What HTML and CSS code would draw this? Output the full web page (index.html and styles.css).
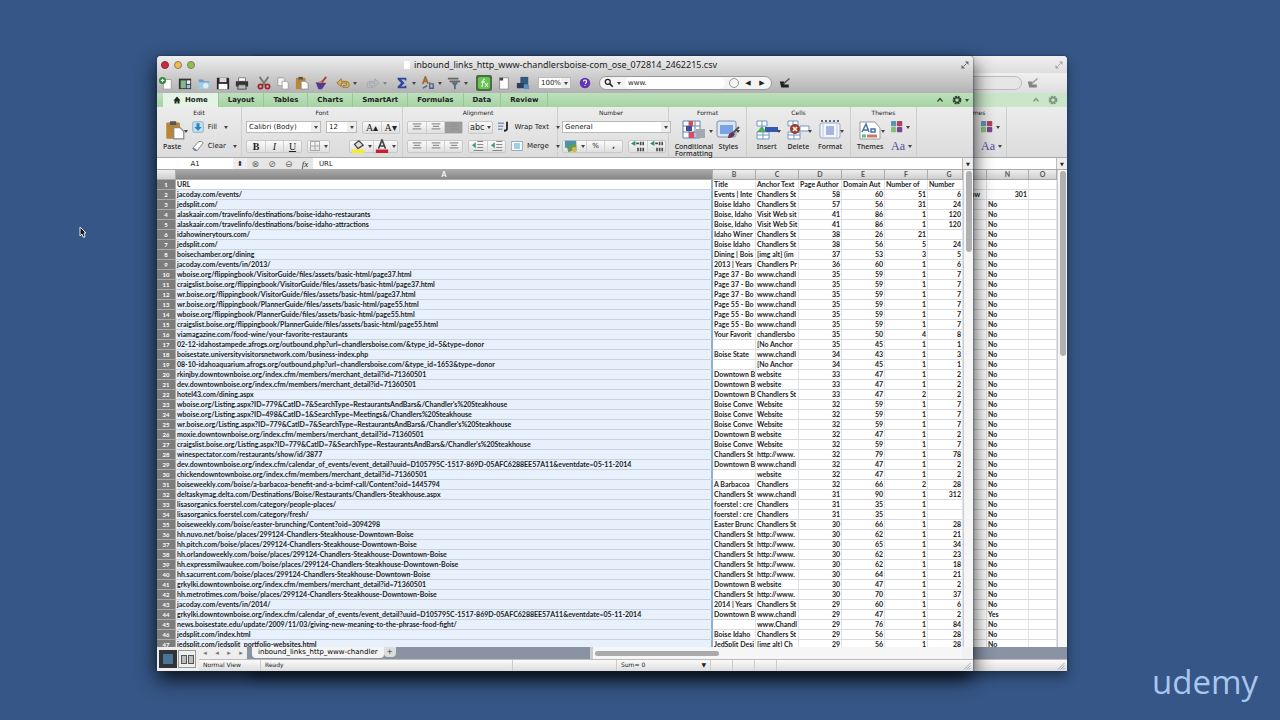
FILE: index.html
```
<!DOCTYPE html>
<html lang="en">
<head>
  <meta charset="UTF-8">
  <meta name="viewport" content="width=device-width, initial-scale=1.0">
  <title>inbound_links_http_www-chandlersboise-com_ose_072814_2462215.csv</title>
  <link rel="stylesheet" href="styles.css">
</head>
<body>

  <!-- icon set -->
  <svg class="defs" aria-hidden="true">
    <symbol id="i-new" viewBox="0 0 16 16"><path d="M5 4h9v11H5z" fill="#fff" stroke="#999"/><circle cx="4" cy="5" r="4" fill="#2f8a35"/><path d="M4 3v4M2 5h4" stroke="#fff" stroke-width="1.4"/></symbol>
    <symbol id="i-gallery" viewBox="0 0 16 16"><rect x="1" y="3" width="14" height="12" fill="#333"/><rect x="3" y="5" width="6" height="9" fill="#7fb98c"/><rect x="10" y="5" width="4" height="4" fill="#eee"/><rect x="10" y="10" width="4" height="4" fill="#9fc0e0"/></symbol>
    <symbol id="i-open" viewBox="0 0 16 16"><path d="M2 4h5l1 2h6v8H2z" fill="#6f9dc2"/><path d="M1 7h14l-1 8H2z" fill="#a4cbe5"/><circle cx="10" cy="11" r="3" fill="#e2eef6"/></symbol>
    <symbol id="i-save" viewBox="0 0 16 16"><path d="M1 2h13l1 1v12H1z" fill="#27272b"/><rect x="4" y="2" width="8" height="5" fill="#d8d8dc"/><rect x="3" y="9" width="10" height="6" fill="#fff"/></symbol>
    <symbol id="i-print" viewBox="0 0 16 16"><path d="M4 2h8v4H4z" fill="#fff" stroke="#777"/><path d="M1 6h14v6H1z" fill="#333"/><path d="M4 10h8l1 5H3z" fill="#bbb" stroke="#444"/></symbol>
    <symbol id="i-cut" viewBox="0 0 16 16"><path d="M3 1l7 10M13 1L6 11" stroke="#777" stroke-width="2"/><circle cx="4" cy="12" r="2.4" fill="none" stroke="#a3232a" stroke-width="2"/><circle cx="12" cy="12" r="2.4" fill="none" stroke="#a3232a" stroke-width="2"/></symbol>
    <symbol id="i-copy" viewBox="0 0 16 16"><path d="M2 2h6l2 2v7H2z" fill="#f4f4f4" stroke="#999"/><path d="M7 6h5l2 2v7H7z" fill="#fff" stroke="#999"/></symbol>
    <symbol id="i-paste" viewBox="0 0 16 16"><rect x="1" y="2" width="11" height="13" rx="1" fill="#b88636"/><rect x="4" y="1" width="5" height="3" fill="#555"/><path d="M7 6h5l3 3v6H7z" fill="#fff" stroke="#888"/></symbol>
    <symbol id="i-brush" viewBox="0 0 16 16"><path d="M2 7l12 1-5 7H5z" fill="#513b91"/><path d="M4 7l5-2 4 3z" fill="#d2843c"/><path d="M9 7l5-6" stroke="#b23b32" stroke-width="2"/></symbol>
    <symbol id="i-undo" viewBox="0 0 16 16"><path d="M1 8l5-5v3h5q4 0 4 4t-4 3H8v-2h3q1 0 1-2t-1-1H6v4z" fill="#d9b353" stroke="#98722a"/></symbol>
    <symbol id="i-redo" viewBox="0 0 16 16"><path d="M15 8l-5-5v3H5q-4 0-4 4t4 3h3v-2H5q-1 0-1-2t1-1h5v4z" fill="#b9bec4" stroke="#a0a5ab"/></symbol>
    <symbol id="i-sum" viewBox="0 0 16 16"><path d="M3 2h10v3h-2V4H7l4 4-4 4h4v-1h2v3H3v-2l4-4-4-4z" fill="#2c46a5"/></symbol>
    <symbol id="i-sort" viewBox="0 0 16 16"><path d="M2 9l3-8 3 8M3 6h4" fill="none" stroke="#a46a35" stroke-width="2"/><path d="M2 14l5-3M10 7v7h4v-5h-3" fill="none" stroke="#4a5f90" stroke-width="1.5"/></symbol>
    <symbol id="i-filter" viewBox="0 0 16 16"><path d="M1 3h12M3 6h12" stroke="#666" stroke-width="2"/><path d="M5 7h8l-3 4v4H8v-4z" fill="#5a6a86"/></symbol>
    <symbol id="i-fx" viewBox="0 0 16 16"><rect width="16" height="16" rx="2" fill="#4b6c45"/><rect x="2" y="2" width="12" height="12" rx="2" fill="#65c653"/><path d="M9 4q-2 0-2 2L6 12M5 7h4M9 8l3 4M12 8l-3 4" stroke="#fff" fill="none"/></symbol>
    <symbol id="i-page" viewBox="0 0 16 16"><path d="M3 2h10v13H3z" fill="#fff" stroke="#888"/><path d="M3 2h4v3H3z" fill="#444"/></symbol>
    <symbol id="i-media" viewBox="0 0 16 16"><rect x="5" y="1" width="9" height="9" fill="#33597f"/><rect x="1" y="8" width="8" height="6" fill="#2c3d60"/><rect x="9" y="10" width="6" height="5" fill="#5b93c2"/></symbol>
    <symbol id="i-help" viewBox="0 0 16 16"><circle cx="8" cy="8" r="7" fill="#6236b0"/><path d="M6 6q0-2 2-2t2 2-2 3M8 11v1" stroke="#fff" stroke-width="1.6" fill="none"/></symbol>
    <symbol id="i-edit" viewBox="0 0 16 16"><path d="M1 6h6v4h6v4H3z" fill="#222"/><path d="M6 9l8-7" stroke="#555" stroke-width="2"/></symbol>
    <symbol id="i-find" viewBox="0 0 16 16"><circle cx="6" cy="6" r="4" fill="none" stroke="#222" stroke-width="2"/><path d="M9 9l5 5" stroke="#222" stroke-width="2.6"/></symbol>
    <symbol id="i-full" viewBox="0 0 16 16"><path d="M8 1h7v7zM1 8v7h7z" fill="#666"/><path d="M5 11l6-6" stroke="#666" stroke-width="2"/></symbol>
    <symbol id="i-home" viewBox="0 0 16 16"><path d="M8 1L1 9h2v6h4v-4h2v4h4V9h2z" fill="#1b2a1b"/></symbol>
    <symbol id="i-gear" viewBox="0 0 16 16"><circle cx="8" cy="8" r="5" fill="none" stroke="#354235" stroke-width="4" stroke-dasharray="3 1"/><circle cx="8" cy="8" r="4" fill="none" stroke="#354235" stroke-width="2"/></symbol>
    <symbol id="i-up" viewBox="0 0 16 16"><path d="M3 11l5-6 5 6" fill="none" stroke="#354235" stroke-width="2.4"/></symbol>
    <symbol id="i-fill" viewBox="0 0 16 16"><rect x="1" y="1" width="14" height="14" rx="2" fill="#c4e1f0" stroke="#78a4bc"/><path d="M6 3h4v5h3l-5 5-5-5h3z" fill="#2d82bd"/></symbol>
    <symbol id="i-clear" viewBox="0 0 16 16"><path d="M1 11l8-9q4-1 6 2l-8 10q-4 1-6-3z" fill="#fff" stroke="#666"/><path d="M1 11q3-1 6 3-5 2-6-3z" fill="#6e87b6"/></symbol>
    <symbol id="i-borders" viewBox="0 0 16 16"><path d="M2 2h12v12H2zM8 2v12M2 8h12" fill="none" stroke="#aaa" stroke-width="1.4"/></symbol>
    <symbol id="i-bucket" viewBox="0 0 16 16"><path d="M4 6l5-4 5 5-6 4z" fill="#ddd" stroke="#444" stroke-width="1.4"/><rect x="1" y="12" width="14" height="4" fill="#f4ee29"/></symbol>
    <symbol id="i-color" viewBox="0 0 16 16"><path d="M4 11L8 1l4 10M5 8h6" fill="none" stroke="#444" stroke-width="1.8"/><rect x="1" y="12" width="14" height="4" fill="#c8202d"/></symbol>
    <symbol id="i-lines" viewBox="0 0 16 16"><path d="M1 3h14M3 7h10M1 11h14" stroke="#929292" stroke-width="1.8"/></symbol>
    <symbol id="i-indent" viewBox="0 0 16 16"><path d="M7 2h8M7 6h8M7 10h8M2 14h13" stroke="#888" stroke-width="1.6"/><path d="M0 7l5-4v8z" fill="#3a9b83"/></symbol>
    <symbol id="i-wrap" viewBox="0 0 16 16"><path d="M0 3h8M0 7h7M0 11h6" stroke="#7d9ac4" stroke-width="2"/><path d="M12 1v9q0 3-4 3" fill="none" stroke="#222" stroke-width="2.4"/></symbol>
    <symbol id="i-merge" viewBox="0 0 16 16"><rect x="1" y="2" width="14" height="12" fill="#fff" stroke="#7d94ad"/><rect x="4" y="4" width="8" height="8" fill="#9dd1ea"/></symbol>
    <symbol id="i-money" viewBox="0 0 16 16"><rect x="1" y="2" width="13" height="8" fill="#4f8fb4"/><path d="M3 8l11-3v7l-9 3z" fill="#5e9f55"/><circle cx="12" cy="12" r="3" fill="#d5b64c"/></symbol>
    <symbol id="i-dec" viewBox="0 0 16 16"><path d="M0 5l5-3v6z" fill="#2b9475"/><path d="M6 5h3M11 3v4M14 3v4M8 10v4M11 10v4M14 10v4" stroke="#444" stroke-width="1.8"/></symbol>
    <symbol id="i-cond" viewBox="0 0 24 20"><path d="M1 1h17v17H1z" fill="#fff" stroke="#6680b5"/><path d="M1 6h17M1 12h17M7 1v17M13 1v17" stroke="#6680b5"/><path d="M7 1h4v5H7zM7 12h5v6H7z" fill="#d64d5b"/><path d="M4 6h6v5H4z" fill="#3b4e9c"/><path d="M14 9h9v9h-9z" fill="#a3a8b3"/></symbol>
    <symbol id="i-styles" viewBox="0 0 24 20"><rect x="1" y="1" width="19" height="16" rx="2" fill="#dbe5f5" stroke="#7f92b4"/><rect x="4" y="5" width="13" height="9" fill="#7aa2e2"/><path d="M23 7l-7 7" stroke="#555" stroke-width="2"/><path d="M17 12q-5 1-5 6 6 0 7-4z" fill="#6b3247"/></symbol>
    <symbol id="i-insert" viewBox="0 0 24 20"><path d="M2 1h10v5H2zM7 1v5M2 12h12v7H2zM8 12v7M2 15h12" fill="#fff" stroke="#7395c7"/><rect x="10" y="7" width="13" height="5" fill="#3558ae"/><path d="M2 12l5-6 4 6z" fill="#4db05a"/></symbol>
    <symbol id="i-delete" viewBox="0 0 24 20"><path d="M2 1h10v5H2zM7 1v5M2 12h12v7H2zM8 12v7M2 15h12M14 6h9v5h-9z" fill="#fff" stroke="#7395c7"/><circle cx="9" cy="9" r="5" fill="#9d3d2b"/><path d="M7 7l4 4M11 7l-4 4" stroke="#fff" stroke-width="1.6"/></symbol>
    <symbol id="i-format" viewBox="0 0 24 20"><rect x="2" y="3" width="20" height="15" rx="2" fill="#f4f7fc" stroke="#92a5c8"/><path d="M3 1h18" stroke="#667" stroke-width="2" stroke-dasharray="2 2"/><rect x="8" y="6" width="8" height="9" fill="#a6b6e4"/><path d="M5 4v13M19 4v13" stroke="#b8c5de"/></symbol>
    <symbol id="i-themes" viewBox="0 0 24 20"><path d="M2 2h15l5 6v11H2z" fill="#fff" stroke="#999"/><path d="M4 12L8 4l3 8M5 10h5M13 9h4v3h-4z" fill="none" stroke="#4670a8" stroke-width="1.5"/><path d="M4 16h4" stroke="#5b9" stroke-width="3"/><path d="M9 16h10" stroke="#c8796a" stroke-width="3"/></symbol>
    <symbol id="i-swatch" viewBox="0 0 16 16"><rect width="7" height="7" rx="1" fill="#6191b2"/><rect x="8" width="7" height="7" rx="1" fill="#b0405c"/><rect y="8" width="7" height="7" rx="1" fill="#83bf72"/><rect x="8" y="8" width="7" height="7" rx="1" fill="#7b4597"/></symbol>
    <symbol id="i-grip" viewBox="0 0 16 16"><path d="M15 2L2 15M15 7l-8 8M15 12l-3 3" stroke="#999" stroke-width="1.6"/></symbol>
  </svg>

  <main class="desktop">

    <section class="window back" aria-label="Background workbook">
      <div class="titlebar"><span class="spacer"></span><svg class="ic8"><use href="#i-full"/></svg></div>
      <div class="toolbar">
        <span class="spacer"></span>
        <span class="search"></span>
        <svg class="ic12 edit"><use href="#i-edit"/></svg>
      </div>
      <div class="tabs"><span class="spacer"></span><svg class="ic8"><use href="#i-up"/></svg><svg class="ic10"><use href="#i-gear"/></svg></div>
      <div class="ribbon">
        <span class="spacer"></span>
        <div class="group themes">
          <h2>Themes</h2>
          <div class="body">
            <div class="big"><svg><use href="#i-themes"/></svg>Themes</div>
            <div class="stack"><span class="pick drop"><svg class="ic12"><use href="#i-swatch"/></svg></span><span class="pick aa drop">Aa</span></div>
          </div>
        </div>
      </div>
      <div class="formula"><span class="spacer"></span><span class="expand">▼</span></div>
      <div class="sheet">
        <div class="pane">
          <table class="grid">
            <colgroup><col><col class="w-s"><col class="w-o"></colgroup>
            <thead><tr><th>M</th><th>N</th><th>O</th></tr></thead>
            <tbody id="backRows"></tbody>
          </table>
        </div>
        <div class="vscroll"><i class="long"></i></div>
      </div>
      <div class="footer">
        <div class="bars">
          <div class="sheetbar"></div>
          <div class="status"><span class="spacer"></span><svg class="ic8"><use href="#i-grip"/></svg></div>
        </div>
      </div>
    </section>

    <section class="window front" aria-label="Workbook">
      <div class="titlebar">
        <button class="light red" aria-label="Close"></button>
        <button class="light yellow" aria-label="Minimize"></button>
        <button class="light green" aria-label="Zoom"></button>
        <h1><i class="doc"></i>inbound_links_http_www-chandlersboise-com_ose_072814_2462215.csv</h1>
        <svg class="ic8"><use href="#i-full"/></svg>
      </div>

      <div class="toolbar">
        <div class="tools">
          <button aria-label="New"><svg class="ic14"><use href="#i-new"/></svg></button>
          <button aria-label="Gallery"><svg class="ic14"><use href="#i-gallery"/></svg></button>
          <button aria-label="Open"><svg class="ic14"><use href="#i-open"/></svg></button>
          <button aria-label="Save"><svg class="ic14"><use href="#i-save"/></svg></button>
          <button aria-label="Print"><svg class="ic14"><use href="#i-print"/></svg></button>
        </div>
        <div class="tools">
          <button aria-label="Cut"><svg class="ic14"><use href="#i-cut"/></svg></button>
          <button aria-label="Copy"><svg class="ic14"><use href="#i-copy"/></svg></button>
          <button aria-label="Paste"><svg class="ic14"><use href="#i-paste"/></svg></button>
          <button aria-label="Format painter"><svg class="ic14"><use href="#i-brush"/></svg></button>
        </div>
        <div class="tools history">
          <button class="drop" aria-label="Undo"><svg class="ic14"><use href="#i-undo"/></svg></button>
          <button class="drop off" aria-label="Redo"><svg class="ic14"><use href="#i-redo"/></svg></button>
        </div>
        <div class="tools">
          <button class="drop" aria-label="AutoSum"><svg class="ic14"><use href="#i-sum"/></svg></button>
          <button class="drop" aria-label="Sort"><svg class="ic14"><use href="#i-sort"/></svg></button>
          <button class="drop" aria-label="Filter"><svg class="ic14"><use href="#i-filter"/></svg></button>
        </div>
        <div class="tools">
          <button aria-label="Formula builder"><svg class="ic16"><use href="#i-fx"/></svg></button>
          <button aria-label="Toolbox"><svg class="ic14"><use href="#i-page"/></svg></button>
          <button aria-label="Media"><svg class="ic14"><use href="#i-media"/></svg></button>
        </div>
        <span class="combo"><input class="zoom" value="100%" aria-label="Zoom level"><button class="drop" aria-label="Zoom options"></button></span>
        <button class="help" aria-label="Help"><svg class="ic12"><use href="#i-help"/></svg></button>
        <div class="search">
          <button class="drop" aria-label="Search options"><svg class="ic10"><use href="#i-find"/></svg></button>
          <input value="www." aria-label="Search in sheet">
          <button class="clear" aria-label="Clear search"></button>
          <button aria-label="Previous">◀</button>
          <button aria-label="Next">▶</button>
        </div>
        <svg class="ic12 edit"><use href="#i-edit"/></svg>
      </div>

      <nav class="tabs">
        <a class="active" href="#home"><svg class="ic8"><use href="#i-home"/></svg>Home</a>
        <a href="#layout">Layout</a>
        <a href="#tables">Tables</a>
        <a href="#charts">Charts</a>
        <a href="#smartart">SmartArt</a>
        <a href="#formulas">Formulas</a>
        <a href="#data">Data</a>
        <a href="#review">Review</a>
        <span class="spacer"></span>
        <button aria-label="Collapse ribbon"><svg class="ic8"><use href="#i-up"/></svg></button>
        <button class="drop" aria-label="Ribbon settings"><svg class="ic10"><use href="#i-gear"/></svg></button>
      </nav>

      <div class="ribbon">
        <div class="group edit-group">
          <h2>Edit</h2>
          <div class="body">
            <button class="big drop"><svg><use href="#i-paste"/></svg>Paste</button>
            <div class="stack">
              <button class="label drop"><svg class="ic12"><use href="#i-fill"/></svg>Fill</button>
              <button class="label drop"><svg class="ic12"><use href="#i-clear"/></svg>Clear</button>
            </div>
          </div>
        </div>
        <div class="group font-group">
          <h2>Font</h2>
          <div class="body stack">
            <div class="line">
              <span class="combo"><input class="font" value="Calibri (Body)" aria-label="Font"><button class="drop" aria-label="Fonts"></button></span>
              <span class="combo"><input class="size" value="12" aria-label="Font size"><button class="drop" aria-label="Sizes"></button></span>
              <span class="seg serif push"><button>A▴</button><button>A▾</button></span>
            </div>
            <div class="line">
              <span class="seg serif"><button><b>B</b></button><button><i>I</i></button><button><u>U</u></button></span>
              <span class="seg"><button class="drop" aria-label="Borders"><svg class="ic12"><use href="#i-borders"/></svg></button></span>
              <span class="seg push"><button class="drop" aria-label="Fill color"><svg class="ic14"><use href="#i-bucket"/></svg></button><button class="drop" aria-label="Font color"><svg class="ic14"><use href="#i-color"/></svg></button></span>
            </div>
          </div>
        </div>
        <div class="group align-group">
          <h2>Alignment</h2>
          <div class="body stack">
            <div class="line">
              <span class="seg"><button aria-label="Top"><svg class="ic10"><use href="#i-lines"/></svg></button><button aria-label="Middle"><svg class="ic10"><use href="#i-lines"/></svg></button><button class="on" aria-label="Bottom"><svg class="ic10"><use href="#i-lines"/></svg></button></span>
              <span class="seg"><button class="abc drop">abc</button></span>
              <button class="label drop push"><svg class="ic12"><use href="#i-wrap"/></svg>Wrap Text</button>
            </div>
            <div class="line">
              <span class="seg"><button aria-label="Left"><svg class="ic10"><use href="#i-lines"/></svg></button><button aria-label="Center"><svg class="ic10"><use href="#i-lines"/></svg></button><button aria-label="Right"><svg class="ic10"><use href="#i-lines"/></svg></button></span>
              <span class="seg"><button aria-label="Outdent"><svg class="ic12"><use href="#i-indent"/></svg></button><button aria-label="Indent"><svg class="ic12"><use href="#i-indent"/></svg></button></span>
              <button class="label drop push"><svg class="ic12"><use href="#i-merge"/></svg>Merge</button>
            </div>
          </div>
        </div>
        <div class="group number-group">
          <h2>Number</h2>
          <div class="body stack">
            <div class="line"><span class="combo full"><input value="General" aria-label="Number format"><button class="drop" aria-label="Formats"></button></span></div>
            <div class="line">
              <span class="seg"><button class="drop" aria-label="Currency"><svg class="ic14"><use href="#i-money"/></svg></button><button>%</button><button><b>,</b></button></span>
              <span class="seg push"><button aria-label="Increase decimals"><svg class="ic14"><use href="#i-dec"/></svg></button><button aria-label="Decrease decimals"><svg class="ic14"><use href="#i-dec"/></svg></button></span>
            </div>
          </div>
        </div>
        <div class="group format-group">
          <h2>Format</h2>
          <div class="body">
            <button class="big drop"><svg><use href="#i-cond"/></svg><span>Conditional<br>Formatting</span></button>
            <button class="big drop"><svg><use href="#i-styles"/></svg>Styles</button>
          </div>
        </div>
        <div class="group cells-group">
          <h2>Cells</h2>
          <div class="body">
            <button class="big drop"><svg><use href="#i-insert"/></svg>Insert</button>
            <button class="big drop"><svg><use href="#i-delete"/></svg>Delete</button>
            <button class="big drop"><svg><use href="#i-format"/></svg>Format</button>
          </div>
        </div>
        <div class="group themes">
          <h2>Themes</h2>
          <div class="body">
            <button class="big drop"><svg><use href="#i-themes"/></svg>Themes</button>
            <div class="stack">
              <button class="pick drop" aria-label="Theme colors"><svg class="ic12"><use href="#i-swatch"/></svg></button>
              <button class="pick aa drop">Aa</button>
            </div>
          </div>
        </div>
      </div>

      <div class="formula">
        <input class="cellname" value="A1" aria-label="Cell">
        <button class="step" aria-label="Names">⬍</button>
        <div class="marks"><span>⊗</span><span>⊘</span><span>⊖</span><em>fx</em></div>
        <input class="entry" value="URL" aria-label="Formula">
        <button class="expand" aria-label="Expand formula bar">▼</button>
      </div>

      <div class="sheet">
        <div class="pane">
          <table class="grid">
            <colgroup><col class="w-n"><col><col class="w-s"><col class="w-s"><col class="w-s"><col class="w-s"><col class="w-s"><col class="w-g"></colgroup>
            <thead><tr><th></th><th class="selected">A</th><th>B</th><th>C</th><th>D</th><th>E</th><th>F</th><th class="cut">G</th></tr></thead>
            <tbody id="frontRows"></tbody>
          </table>
        </div>
        <div class="vscroll"><i></i></div>
      </div>

      <div class="footer">
        <div class="views">
          <button class="on" aria-label="Normal view"></button>
          <button aria-label="Page layout view"><i></i><i></i></button>
        </div>
        <div class="bars">
          <div class="sheetbar">
            <div class="arrows"><button aria-label="First sheet">◂</button><button aria-label="Previous sheet">◂</button><button aria-label="Next sheet">▸</button><button aria-label="Last sheet">▸</button></div>
            <a class="sheettab" href="#sheet">inbound_links_http_www-chandler</a>
            <button class="plus" aria-label="Add sheet">+</button>
            <div class="hscroll"><i></i></div>
          </div>
          <div class="status">
            <span class="view">Normal View</span>
            <span class="ready">Ready</span>
            <span class="empty"></span>
            <span class="sum">Sum= 0<b>▼</b></span>
            <span class="cell"></span><span class="cell"></span><span class="cell"></span>
            <span class="spacer"></span>
            <svg class="ic8"><use href="#i-grip"/></svg>
          </div>
        </div>
      </div>
    </section>

    <svg class="pointer" viewBox="0 0 8 12"><path d="M1 1v9l2-2 1 3h2L5 7h2z" fill="#1a1a1a" stroke="#e3eaf2"/></svg>
    <div class="brand">udemy</div>
  </main>

  <script>
    const BS = "Boise Idaho", DT = "Downtown B", BC = "Boise Conve", CS = "Chandlers St";
    const WC = "www.chandl", HW = "http://www.", NA = "[No Anchor";

    // url, title, anchor text, page authority, domain authority, links, linking domains
    const rows = [
      ["URL", "Title", "Anchor Text", "Page Author", "Domain Aut", "Number of", "Number"],
      ["jacoday.com/events/", "Events | Inte", CS, 58, 60, 51, 6],
      ["jedsplit.com/", BS, CS, 57, 56, 31, 24],
      ["alaskaair.com/travelinfo/destinations/boise-idaho-restaurants", "Boise, Idaho", "Visit Web sit", 41, 86, 1, 120],
      ["alaskaair.com/travelinfo/destinations/boise-idaho-attractions", "Boise, Idaho", "Visit Web Sit", 41, 86, 1, 120],
      ["idahowinerytours.com/", "Idaho Winer", CS, 38, 26, 21, ""],
      ["jedsplit.com/", BS, CS, 38, 56, 5, 24],
      ["boisechamber.org/dining", "Dining | Bois", "[img alt] (im", 37, 53, 3, 5],
      ["jacoday.com/events/in/2013/", "2013 | Years", "Chandlers Pr", 36, 60, 1, 6],
      ["wboise.org/flippingbook/VisitorGuide/files/assets/basic-html/page37.html", "Page 37 - Bo", WC, 35, 59, 1, 7],
      ["craigslist.boise.org/flippingbook/VisitorGuide/files/assets/basic-html/page37.html", "Page 37 - Bo", WC, 35, 59, 1, 7],
      ["wr.boise.org/flippingbook/VisitorGuide/files/assets/basic-html/page37.html", "Page 37 - Bo", WC, 35, 59, 1, 7],
      ["wr.boise.org/flippingbook/PlannerGuide/files/assets/basic-html/page55.html", "Page 55 - Bo", WC, 35, 59, 1, 7],
      ["wboise.org/flippingbook/PlannerGuide/files/assets/basic-html/page55.html", "Page 55 - Bo", WC, 35, 59, 1, 7],
      ["craigslist.boise.org/flippingbook/PlannerGuide/files/assets/basic-html/page55.html", "Page 55 - Bo", WC, 35, 59, 1, 7],
      ["viamagazine.com/food-wine/your-favorite-restaurants", "Your Favorit", "chandlersbo", 35, 50, 4, 8],
      ["02-12-idahostampede.afrogs.org/outbound.php?url=chandlersboise.com/&type_id=5&type=donor", "", NA, 35, 45, 1, 1],
      ["boisestate.universityvisitorsnetwork.com/business-index.php", "Boise State", WC, 34, 43, 1, 3],
      ["08-10-idahoaquarium.afrogs.org/outbound.php?url=chandlersboise.com/&type_id=1653&type=donor", "", NA, 34, 45, 1, 1],
      ["rkinjby.downtownboise.org/index.cfm/members/merchant_detail?id=71360501", DT, "website", 33, 47, 1, 2],
      ["dev.downtownboise.org/index.cfm/members/merchant_detail?id=71360501", DT, "website", 33, 47, 1, 2],
      ["hotel43.com/dining.aspx", DT, CS, 33, 47, 2, 2],
      ["wboise.org/Listing.aspx?ID=779&CatID=7&SearchType=RestaurantsAndBars&/Chandler's%20Steakhouse", BC, "Website", 32, 59, 1, 7],
      ["wboise.org/Listing.aspx?ID=498&CatID=1&SearchType=Meetings&/Chandlers%20Steakhouse", BC, "Website", 32, 59, 1, 7],
      ["wr.boise.org/Listing.aspx?ID=779&CatID=7&SearchType=RestaurantsAndBars&/Chandler's%20Steakhouse", BC, "Website", 32, 59, 1, 7],
      ["moxie.downtownboise.org/index.cfm/members/merchant_detail?id=71360501", DT, "website", 32, 47, 1, 2],
      ["craigslist.boise.org/Listing.aspx?ID=779&CatID=7&SearchType=RestaurantsAndBars&/Chandler's%20Steakhouse", BC, "Website", 32, 59, 1, 7],
      ["winespectator.com/restaurants/show/id/3877", CS, HW, 32, 79, 1, 78],
      ["dev.downtownboise.org/index.cfm/calendar_of_events/event_detail?uuid=D105795C-1517-869D-05AFC6288EE57A11&eventdate=05-11-2014", DT, WC, 32, 47, 1, 2],
      ["chickendowntownboise.org/index.cfm/members/merchant_detail?id=71360501", "", "website", 32, 47, 1, 2],
      ["boiseweekly.com/boise/a-barbacoa-benefit-and-a-bcimf-call/Content?oid=1445794", "A Barbacoa", "Chandlers", 32, 66, 2, 28],
      ["deltaskymag.delta.com/Destinations/Boise/Restaurants/Chandlers-Steakhouse.aspx", CS, WC, 31, 90, 1, 312],
      ["lisasorganics.foerstel.com/category/people-places/", "foerstel : cre", "Chandlers", 31, 35, 1, ""],
      ["lisasorganics.foerstel.com/category/fresh/", "foerstel : cre", "Chandlers", 31, 35, 1, ""],
      ["boiseweekly.com/boise/easter-brunching/Content?oid=3094298", "Easter Brunc", CS, 30, 66, 1, 28],
      ["hh.nuvo.net/boise/places/299124-Chandlers-Steakhouse-Downtown-Boise", CS, HW, 30, 62, 1, 21],
      ["hh.pitch.com/boise/places/299124-Chandlers-Steakhouse-Downtown-Boise", CS, HW, 30, 65, 1, 34],
      ["hh.orlandoweekly.com/boise/places/299124-Chandlers-Steakhouse-Downtown-Boise", CS, HW, 30, 62, 1, 23],
      ["hh.expressmilwaukee.com/boise/places/299124-Chandlers-Steakhouse-Downtown-Boise", CS, HW, 30, 62, 1, 18],
      ["hh.sacurrent.com/boise/places/299124-Chandlers-Steakhouse-Downtown-Boise", CS, HW, 30, 64, 1, 21],
      ["grkylki.downtownboise.org/index.cfm/members/merchant_detail?id=71360501", DT, "website", 30, 47, 1, 2],
      ["hh.metrotimes.com/boise/places/299124-Chandlers-Steakhouse-Downtown-Boise", CS, HW, 30, 70, 1, 37],
      ["jacoday.com/events/in/2014/", "2014 | Years", CS, 29, 60, 1, 6],
      ["grkylki.downtownboise.org/index.cfm/calendar_of_events/event_detail?uuid=D105795C-1517-869D-05AFC6288EE57A11&eventdate=05-11-2014", DT, WC, 29, 47, 1, 2],
      ["news.boisestate.edu/update/2009/11/03/giving-new-meaning-to-the-phrase-food-fight/", "", "www.Chandl", 29, 76, 1, 84],
      ["jedsplit.com/index.html", BS, CS, 29, 56, 1, 28],
      ["jedsplit.com/jedsplit_portfolio-websites.html", "JedSplit Desi", "[img alt] Ch", 29, 56, 1, 28]
    ];

    function addCell(tr, text, tag = "td") {
      const cell = document.createElement(tag);
      cell.textContent = text;
      if (typeof text === "number" && tag === "td") cell.className = "num";
      tr.appendChild(cell);
    }

    rows.forEach((row, i) => {
      const front = document.createElement("tr");
      addCell(front, i + 1, "th");
      row.forEach(value => addCell(front, value));
      document.getElementById("frontRows").appendChild(front);

      const back = document.createElement("tr");
      addCell(back, i === 1 ? "follow" : "");
      addCell(back, i === 0 ? "" : i === 1 ? 301 : i === 43 ? "Yes" : "No");
      addCell(back, "");
      document.getElementById("backRows").appendChild(back);
    });
  </script>
</body>
</html>
```

FILE: styles.css
```
* {
  box-sizing: border-box;
}
body {
  margin: 0;
  font-family: "DejaVu Sans", sans-serif;
  font-size: 7px;
  color: #222;
}
button, input {
  font: inherit;
  color: inherit;
  margin: 0;
  padding: 0;
  border: 0;
  background: none;
  min-width: 0;
}
button {
  display: flex;
  align-items: center;
  justify-content: center;
  white-space: nowrap;
}
a {
  color: inherit;
  text-decoration: none;
}
h1, h2 {
  margin: 0;
  font-weight: normal;
}
svg {
  display: block;
  flex: none;
}
.defs {
  display: none;
}
.ic8 { width: 8px; height: 8px; }
.ic10 { width: 10px; height: 10px; }
.ic12 { width: 12px; height: 12px; }
.ic14 { width: 14px; height: 14px; }
.ic16 { width: 16px; height: 16px; }
.spacer {
  flex: 1;
}
.push {
  margin-left: auto;
}
.drop::after {
  content: "";
  margin-left: 3px;
  border: 2px solid transparent;
  border-top: 3px solid #444;
  border-bottom: 0;
}

/* desktop */
.desktop {
  position: relative;
  height: 100vh;
  overflow: hidden;
  background: #355686;
}
.window {
  position: absolute;
  top: 56px;
  bottom: 49px;
  display: flex;
  flex-direction: column;
  border-radius: 4px 4px 0 0;
  background: #e8e8e8;
  overflow: hidden;
}
.front {
  left: 157px;
  right: 307px;
  box-shadow: 0 0 2px #1b2a4a, 0 8px 20px rgba(0, 0, 0, 0.85);
}
.back {
  left: 251px;
  right: 213px;
  box-shadow: 0 0 2px #1b2a4a, 0 6px 12px rgba(0, 0, 0, 0.4);
}
.pointer {
  position: absolute;
  left: 79px;
  top: 226px;
  width: 8px;
  height: 12px;
}
.brand {
  position: absolute;
  right: 22px;
  bottom: 18px;
  font: 33px/40px "Open Sans", sans-serif;
  color: #a9c6ee;
}

/* title and toolbar */
.titlebar {
  display: flex;
  align-items: center;
  gap: 5px;
  height: 17px;
  padding: 0 4px;
  background: linear-gradient(#eeeeee, #d2d2d2);
}
.titlebar h1 {
  flex: 1;
  display: flex;
  align-items: center;
  justify-content: center;
  gap: 4px;
  padding-right: 35px;
  font-family: "Noto Sans", sans-serif;
  font-size: 9px;
}
.doc {
  width: 6px;
  height: 8px;
  background: #fff;
}
.light {
  width: 8px;
  height: 8px;
  border-radius: 50%;
  border: 1px solid #8a7a60;
}
.red { background: #c82a43; border-color: #8d2435; }
.yellow { background: #eebf4e; }
.green { background: #8bc34d; }
.toolbar {
  display: flex;
  align-items: center;
  height: 20px;
  padding: 0 4px 0 2px;
  background: linear-gradient(#d2d2d2, #b2b2b2);
}
.tools {
  display: flex;
  gap: 5px;
  margin-right: 8px;
}
.tools.history {
  gap: 9px;
}
.off::after {
  opacity: 0.5;
}
.combo {
  display: flex;
  height: 12px;
  background: #fff;
  border: 1px solid #bbb;
}
.combo button {
  width: 9px;
  background: #eee;
}
.combo .drop::after {
  margin-left: 0;
}
.zoom {
  width: 22px;
}
.help {
  margin: 0 8px;
}
.search {
  display: flex;
  align-items: center;
  width: 173px;
  height: 14px;
  border: 1px solid #999;
  border-radius: 7px;
  background: #f4f4f4;
  gap: 4px;
  padding: 0 4px;
}
.search input {
  flex: 1;
  height: 12px;
  padding-left: 3px;
  border-radius: 6px;
  background: #fff;
}
.search button {
  min-width: 10px;
}
.clear {
  height: 10px;
  border: 1px solid #999;
  border-radius: 50%;
}
.edit {
  margin-left: 7px;
}

/* ribbon tabs */
.tabs {
  display: flex;
  align-items: center;
  height: 14px;
  padding-right: 4px;
  gap: 0;
  background: linear-gradient(#bce0bb, #a5d3a3);
}
.tabs a {
  display: flex;
  align-items: center;
  gap: 4px;
  height: 14px;
  padding: 0 9px;
  border-right: 1px solid #9cc69a;
  font-weight: bold;
}
.tabs .active {
  margin-left: 6px;
  padding: 0 10px;
  background: #e5f3e5;
}
.tabs > svg, .tabs > button {
  margin-left: 8px;
}

/* ribbon */
.ribbon {
  display: flex;
  height: 51px;
  padding: 0;
  background: linear-gradient(#ececec, #dcdcdc);
  border-bottom: 1px solid #aaa;
}
.group {
  display: flex;
  flex-direction: column;
  padding: 0 4px;
  border-right: 1px solid #cfcfcf;
}
.group h2 {
  height: 12px;
  line-height: 12px;
  font-size: 6px;
  text-align: center;
}
.body {
  flex: 1;
  display: flex;
  justify-content: space-around;
}
.stack {
  display: flex;
  flex-direction: column;
  justify-content: flex-start;
  gap: 5px;
  padding-top: 1px;
}
.body.stack {
  justify-content: flex-start;
}
.line {
  display: flex;
  align-items: center;
  gap: 5px;
  height: 14px;
}
.edit-group { width: 85px; }
.font-group { width: 161px; }
.align-group { width: 155px; padding-right: 8px; }
.number-group { width: 111px; padding-right: 8px; }
.format-group { width: 78px; }
.cells-group { width: 104px; }
.themes { width: 66px; }
.label, .pick {
  height: 14px;
  gap: 4px;
  display: flex;
  align-items: center;
  justify-content: flex-start;
}
.pick {
  gap: 0;
}
.edit-group .stack {
  padding-left: 4px;
}
.big {
  position: relative;
  display: flex;
  flex-direction: column;
  justify-content: flex-start;
  gap: 1px;
  padding: 1px 2px 0;
  font-family: "Noto Sans", sans-serif;
  font-weight: 500;
  line-height: 7px;
  align-items: center;
}
.big svg {
  width: 24px;
  height: 20px;
  margin-bottom: 2px;
}
.edit-group .big {
  align-items: flex-start;
}
.big.drop::after {
  position: absolute;
  right: 0;
  top: 11px;
}
.format-group .big {
  padding: 1px 0 0;
}
.themes .body {
  justify-content: space-between;
}
.combo.full {
  flex: 1;
}
.combo.full input {
  flex: 1;
}
.combo input {
  padding-left: 2px;
}
.font { width: 64px; }
.size { width: 20px; }
.seg {
  display: flex;
  height: 13px;
  border: 1px solid #c8c8c8;
  border-radius: 2px;
  background: linear-gradient(#fafafa, #dfdfdf);
}
.seg button {
  min-width: 18px;
  padding: 0 1px;
}
.seg button + button {
  border-left: 1px solid #d0d0d0;
}
.serif {
  font-family: "Liberation Serif", serif;
  font-size: 10px;
}
.seg .on {
  background: #9b9b9b;
}
.abc {
  font-size: 8px;
}
.aa {
  font: 12px "Liberation Serif", serif;
  color: #4c4f9b;
}

/* formula bar */
.formula {
  display: flex;
  height: 12px;
  background: #fff;
  border-bottom: 1px solid #aaa;
}
.cellname {
  width: 76px;
  text-align: center;
}
.step {
  width: 14px;
  background: #eee;
}
.marks {
  display: flex;
  align-items: center;
  justify-content: space-around;
  width: 66px;
  background: #e6e6e6;
  font-size: 9px;
  color: #666;
}
.marks em {
  font-family: "Liberation Serif", serif;
  color: #222;
}
.entry {
  flex: 1;
  padding-left: 6px;
}
.expand {
  width: 11px;
  border-left: 1px solid #bbb;
  background: #eee;
  font-size: 5px;
  line-height: 12px;
  text-align: center;
}

/* sheet */
.sheet {
  flex: 1;
  min-height: 0;
  display: flex;
  background: #fff;
}
.pane {
  flex: 1;
  min-width: 0;
  overflow: hidden;
}
.grid {
  width: 100%;
  table-layout: fixed;
  border-collapse: separate;
  border-spacing: 0;
  font: 7px/9px Lato, sans-serif;
  color: #222;
}
.w-n { width: 19px; }
.w-s { width: 43px; }
.w-o { width: 28px; }
.w-g { width: 35px; }
.back .w-s { width: 42px; }
.grid th, .grid td {
  height: 10px;
  padding: 0 1px;
  border-bottom: 1px solid #d9dbde;
  border-right: 1px solid #e0e2e5;
  overflow: hidden;
  white-space: nowrap;
  text-align: left;
  font-weight: bold;
}
.grid thead th {
  background: linear-gradient(#eee, #cfcfcf);
  border-color: #aaa;
  text-align: center;
  color: #555;
}
.grid thead .selected {
  background: linear-gradient(#a8a8a8, #888);
  color: #fff;
}
.grid thead .cut {
  padding-left: 9px;
}
.grid tbody th {
  background: #7d7d7d;
  border-color: #aaa;
  color: #fff;
  text-align: center;
  font-size: 6px;
}
.grid .num {
  text-align: right;
}
.front td:nth-child(2) {
  background: #e7f0fb;
  border-right: 2px solid #8ab0d2;
  border-bottom-color: #c8d3e1;
}
.front tbody tr:first-child td:nth-child(2) {
  background: #fff;
}
.vscroll {
  width: 10px;
  padding: 1px 2px;
  border-left: 1px solid #ccc;
  background: #f6f6f6;
}
.vscroll i {
  display: block;
  width: 6px;
  height: 17%;
  border-radius: 3px;
  background: #b1b1b1;
}
.vscroll .long {
  height: 39%;
}

/* footer */
.footer {
  display: flex;
  height: 24px;
  background: #eee;
}
.views {
  display: flex;
  gap: 1px;
  width: 42px;
  padding: 3px 2px;
}
.views button {
  width: 18px;
  border: 1px solid #999;
  gap: 1px;
}
.views .on {
  background: #4a7396;
  border: 4px solid #303338;
}
.views i {
  width: 6px;
  height: 9px;
  border: 1px solid #555;
  background: #bbb;
}
.bars {
  flex: 1;
  min-width: 0;
}
.sheetbar {
  display: flex;
  height: 12px;
  background: #8a93a4;
}
.arrows {
  display: flex;
  justify-content: space-around;
  width: 48px;
  background: #eee;
  color: #777;
}
.sheettab {
  margin-left: 5px;
  padding: 0 6px;
  height: 11px;
  line-height: 10px;
  border-radius: 0 0 4px 4px;
  background: #f4f4f4;
  color: #000;
}
.plus {
  width: 12px;
  height: 10px;
  border-radius: 0 0 4px 4px;
  background: #ddd;
}
.hscroll {
  width: 48%;
  margin-left: auto;
  margin-right: 11px;
  padding: 4px 2px;
  border-left: 3px solid #ccc;
  background: #f6f6f6;
}
.front .sheetbar {
  background: linear-gradient(90deg, #8a93a4 97%, #f2f2f2 97%);
}
.hscroll i {
  display: block;
  width: 34%;
  height: 5px;
  border-radius: 3px;
  background: #aaa;
}
.status {
  display: flex;
  align-items: center;
  height: 12px;
  padding-right: 2px;
  line-height: 10px;
  border-top: 1px solid #bbb;
  background: linear-gradient(#fafafa, #ddd);
  font-size: 6px;
}
.status span:not(.spacer) {
  height: 11px;
  padding-left: 4px;
  border-right: 1px solid #ccc;
}
.view { width: 62px; }
.ready { width: 252px; }
.empty { width: 104px; }
.sum {
  display: flex;
  justify-content: space-between;
  width: 94px;
  padding-right: 4px;
}
.cell { width: 22px; }

/* inactive window */
.back .toolbar, .back .titlebar {
  background: linear-gradient(#f0f0f0, #dedede);
}
.back .tabs {
  background: #c9e6c8;
  padding-right: 9px;
}
.back .search {
  background: #e6e6e6;
  border-color: #bbb;
}
.back .toolbar svg, .back .titlebar svg, .back .tabs svg {
  opacity: 0.5;
}
.back .edit {
  margin: 0 24px 0 5px;
}
.back .themes {
  margin-right: 60px;
}
.front .toolbar .edit {
  margin-right: auto;
}
.back tbody tr:nth-child(2) td:first-child {
  text-align: right;
  padding-right: 6px;
}
```
